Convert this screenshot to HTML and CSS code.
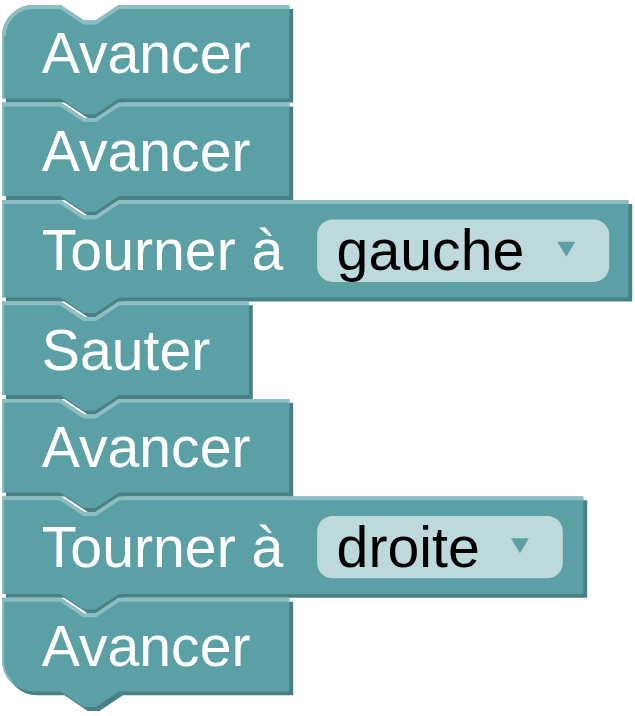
FILE: index.html
```html
<!DOCTYPE html>
<html lang="fr">
<head>
<meta charset="utf-8">
<title>Blocs</title>
<link rel="stylesheet" href="styles.css">
</head>
<body>
<svg class="workspace" width="635" height="716" viewBox="0 0 635 716">
  <g transform="translate(2 5) scale(3.9)">
    <!-- 1 Avancer -->
    <g class="block" transform="translate(0 0)">
      <path class="blk-dark" transform="translate(1 1)" d="M0,8 A8,8 0 0 1 8,0 H15 l6,4 3,0 6,-4 H73.67 V24 H30 l-6,4 -3,0 -6,-4 H0 Z"/>
      <path class="blk-fill" d="M0,8 A8,8 0 0 1 8,0 H15 l6,4 3,0 6,-4 H73.67 V24 H30 l-6,4 -3,0 -6,-4 H0 Z"/>
      <path class="blk-light" d="M0.5,8 A7.5,7.5 0 0 1 8,0.5 H15 l6,4 3,0 6,-4 H73.67"/>
      <path class="blk-side" d="M0.25,8 V24"/>
      <text class="blk-label" x="10.2" y="17.5">Avancer</text>
    </g>
    <!-- 2 Avancer -->
    <g class="block" transform="translate(0 25)">
      <path class="blk-dark" transform="translate(1 1)" d="M0,0 H15 l6,4 3,0 6,-4 H73.67 V24 H30 l-6,4 -3,0 -6,-4 H0 Z"/>
      <path class="blk-fill" d="M0,0 H15 l6,4 3,0 6,-4 H73.67 V24 H30 l-6,4 -3,0 -6,-4 H0 Z"/>
      <path class="blk-light" d="M0,0.5 H15 l6,4 3,0 6,-4 H73.67"/>
      <path class="blk-side" d="M0.25,0 V24"/>
      <text class="blk-label" x="10.2" y="17.5">Avancer</text>
    </g>
    <!-- 3 Tourner à gauche -->
    <g class="block" transform="translate(0 50)">
      <path class="blk-dark" transform="translate(1 1)" d="M0,0 H15 l6,4 3,0 6,-4 H160.6 V25 H30 l-6,4 -3,0 -6,-4 H0 Z"/>
      <path class="blk-fill" d="M0,0 H15 l6,4 3,0 6,-4 H160.6 V25 H30 l-6,4 -3,0 -6,-4 H0 Z"/>
      <path class="blk-light" d="M0,0.5 H15 l6,4 3,0 6,-4 H160.6"/>
      <path class="blk-side" d="M0.25,0 V25"/>
      <text class="blk-label" x="10.2" y="18">Tourner à</text>
      <rect class="fld-bg" x="80.8" y="5" width="74.9" height="16" rx="4" ry="4"/>
      <text class="fld-text" x="85.8" y="18">gauche</text>
      <polygon class="fld-arrow" points="142.4,10.7 147,10.7 144.7,14.55"/>
    </g>
    <!-- 4 Sauter -->
    <g class="block" transform="translate(0 76)">
      <path class="blk-dark" transform="translate(1 1)" d="M0,0 H15 l6,4 3,0 6,-4 H63.3 V24 H30 l-6,4 -3,0 -6,-4 H0 Z"/>
      <path class="blk-fill" d="M0,0 H15 l6,4 3,0 6,-4 H63.3 V24 H30 l-6,4 -3,0 -6,-4 H0 Z"/>
      <path class="blk-light" d="M0,0.5 H15 l6,4 3,0 6,-4 H63.3"/>
      <path class="blk-side" d="M0.25,0 V24"/>
      <text class="blk-label" x="10.2" y="17.5">Sauter</text>
    </g>
    <!-- 5 Avancer -->
    <g class="block" transform="translate(0 101)">
      <path class="blk-dark" transform="translate(1 1)" d="M0,0 H15 l6,4 3,0 6,-4 H73.67 V24 H30 l-6,4 -3,0 -6,-4 H0 Z"/>
      <path class="blk-fill" d="M0,0 H15 l6,4 3,0 6,-4 H73.67 V24 H30 l-6,4 -3,0 -6,-4 H0 Z"/>
      <path class="blk-light" d="M0,0.5 H15 l6,4 3,0 6,-4 H73.67"/>
      <path class="blk-side" d="M0.25,0 V24"/>
      <text class="blk-label" x="10.2" y="17.5">Avancer</text>
    </g>
    <!-- 6 Tourner à droite -->
    <g class="block" transform="translate(0 126)">
      <path class="blk-dark" transform="translate(1 1)" d="M0,0 H15 l6,4 3,0 6,-4 H149.05 V25 H30 l-6,4 -3,0 -6,-4 H0 Z"/>
      <path class="blk-fill" d="M0,0 H15 l6,4 3,0 6,-4 H149.05 V25 H30 l-6,4 -3,0 -6,-4 H0 Z"/>
      <path class="blk-light" d="M0,0.5 H15 l6,4 3,0 6,-4 H149.05"/>
      <path class="blk-side" d="M0.25,0 V25"/>
      <text class="blk-label" x="10.2" y="18">Tourner à</text>
      <rect class="fld-bg" x="80.8" y="5" width="63" height="16" rx="4" ry="4"/>
      <text class="fld-text" x="85.8" y="18">droite</text>
      <polygon class="fld-arrow" points="130.5,10.7 135.1,10.7 132.8,14.55"/>
    </g>
    <!-- 7 Avancer -->
    <g class="block" transform="translate(0 152)">
      <path class="blk-dark" transform="translate(1 1)" d="M0,0 H15 l6,4 3,0 6,-4 H73.67 V24 H30 l-6,4 -3,0 -6,-4 H8 A8,8 0 0 1 0,16 Z"/>
      <path class="blk-fill" d="M0,0 H15 l6,4 3,0 6,-4 H73.67 V24 H30 l-6,4 -3,0 -6,-4 H8 A8,8 0 0 1 0,16 Z"/>
      <path class="blk-light" d="M0,0.5 H15 l6,4 3,0 6,-4 H73.67"/>
      <path class="blk-side" d="M0.25,0 V16 A7.75,7.75 0 0 0 2.5,21.5"/>
      <text class="blk-label" x="10.2" y="17.5">Avancer</text>
    </g>
  </g>
</svg>
</body>
</html>
```

FILE: styles.css
```css
html, body {
  margin: 0;
  padding: 0;
  background: #ffffff;
}

.workspace {
  display: block;
}

.blk-fill {
  fill: #5ba0a5;
}

.blk-dark {
  fill: #498084;
}

.blk-light {
  fill: none;
  stroke: #8cbdc1;
  stroke-width: 1;
}

.blk-side {
  fill: none;
  stroke: #8cbdc1;
  stroke-width: 0.5;
}

.blk-label {
  fill: #ffffff;
  font-family: "Liberation Sans", Arial, sans-serif;
  font-size: 14.67px;
}

.fld-bg {
  fill: #ffffff;
  fill-opacity: 0.6;
}

.fld-text {
  fill: #000000;
  font-family: "Liberation Sans", Arial, sans-serif;
  font-size: 14.67px;
}

.fld-arrow {
  fill: #5ba0a5;
}
```
